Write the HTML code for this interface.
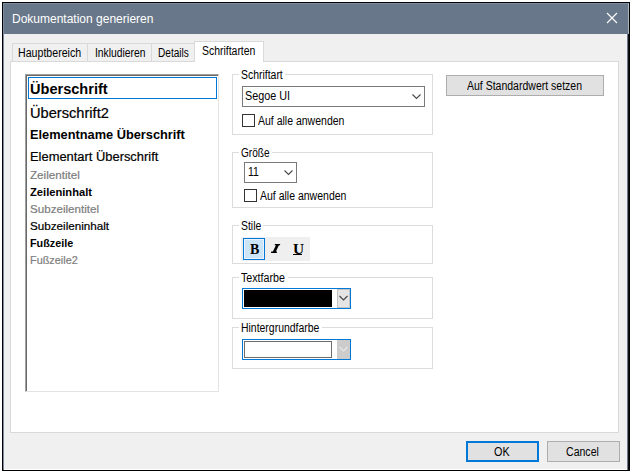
<!DOCTYPE html>
<html><head><meta charset="utf-8">
<style>
*{box-sizing:border-box;margin:0;padding:0}
html,body{width:632px;height:473px;overflow:hidden;background:#fff}
body{position:relative;font-family:"Liberation Sans",sans-serif;color:#000}
.a{position:absolute}
.t{position:absolute;white-space:nowrap;font-size:12px;line-height:12px;transform-origin:0 0}
.grp{position:absolute;border:1px solid #dcdcdc}
.lbl{position:absolute;background:#fff;padding:0 2px 0 2px;height:12px}
.cb{position:absolute;width:13px;height:13px;border:1px solid #333;background:#fff}
.btn{position:absolute;background:#e1e1e1;border:1px solid #adadad}
.li{position:absolute;left:30px;white-space:nowrap;transform-origin:0 0;-webkit-text-stroke:0.2px}
</style></head><body>
<!-- window frame -->
<div class="a" style="left:2px;top:2px;width:628px;height:469px;border:1px solid #000;background:#687789"></div>
<div class="a" style="left:3px;top:3px;width:625px;height:1px;background:#7b8a9c"></div>
<div class="a" style="left:3px;top:3px;width:1px;height:466px;background:#7b8a9c"></div>
<!-- title -->
<div class="t" style="left:12px;top:13px;color:#fff">Dokumentation generieren</div>
<svg class="a" style="left:605px;top:11px" width="14" height="14" viewBox="0 0 14 14"><path d="M2 2 L12 12 M12 2 L2 12" stroke="#fff" stroke-width="1.1" fill="none"/></svg>
<!-- body -->
<div class="a" style="left:4px;top:34px;width:623px;height:435px;background:#f0f0f0"></div>
<div class="a" style="left:4px;top:469px;width:623px;height:1px;background:#fff"></div>
<div class="a" style="left:628px;top:34px;width:1px;height:436px;background:#111"></div>
<div class="a" style="left:628px;top:3px;width:1px;height:31px;background:#a9b8c0"></div>

<!-- tabs -->
<div class="a" style="left:12px;top:43px;width:76px;height:19px;border:1px solid #d9d9d9;border-bottom:0;background:#f0f0f0"></div>
<div class="a" style="left:87px;top:43px;width:65px;height:19px;border:1px solid #d9d9d9;border-bottom:0;background:#f0f0f0"></div>
<div class="a" style="left:151px;top:43px;width:44px;height:19px;border:1px solid #d9d9d9;border-bottom:0;background:#f0f0f0"></div>
<!-- panel -->
<div class="a" style="left:10px;top:61px;width:609px;height:372px;border:1px solid #d9d9d9;background:#fff"></div>
<!-- selected tab -->
<div class="a" style="left:194px;top:41px;width:70px;height:21px;border:1px solid #d9d9d9;border-bottom:0;background:#fff"></div>

<div class="t" style="left:18px;top:47px;transform:scaleX(0.885)">Hauptbereich</div>
<div class="t" style="left:95px;top:47px;transform:scaleX(0.86)">Inkludieren</div>
<div class="t" style="left:158px;top:47px;transform:scaleX(0.84)">Details</div>
<div class="t" style="left:202px;top:45px;transform:scaleX(0.87)">Schriftarten</div>

<!-- listbox -->
<div class="a" style="left:25px;top:74px;width:194px;height:318px;border-style:solid;border-width:1px;border-color:#a0a0a0 #e3e3e3 #e3e3e3 #a0a0a0;background:#fff"></div>
<div class="a" style="left:26px;top:75px;width:192px;height:316px;border-style:solid;border-width:1px 0 0 1px;border-color:#696969"></div>
<div class="a" style="left:28px;top:77px;width:189px;height:22px;border:1px solid #0078d7"></div>

<div class="li" style="top:82px;-webkit-text-stroke:0;font-weight:bold;font-size:14px;line-height:14px;transform:scaleX(1.04)">Überschrift</div>
<div class="li" style="top:106px;font-size:14px;line-height:14px;transform:scaleX(1.045)">Überschrift2</div>
<div class="li" style="top:129px;-webkit-text-stroke:0;font-weight:bold;font-size:12px;line-height:12px;transform:scaleX(1.065)">Elementname Überschrift</div>
<div class="li" style="top:151px;font-size:12px;line-height:12px;transform:scaleX(1.075)">Elementart Überschrift</div>
<div class="li" style="top:170px;font-size:11px;line-height:11px;color:#7d7d7d;transform:scaleX(1.06)">Zeilentitel</div>
<div class="li" style="top:187px;-webkit-text-stroke:0;font-weight:bold;font-size:11px;line-height:11px;transform:scaleX(1.015)">Zeileninhalt</div>
<div class="li" style="top:204px;font-size:11px;line-height:11px;color:#7d7d7d;transform:scaleX(1.055)">Subzeilentitel</div>
<div class="li" style="top:221px;font-size:11px;line-height:11px;transform:scaleX(1.06)">Subzeileninhalt</div>
<div class="li" style="top:238px;-webkit-text-stroke:0;font-weight:bold;font-size:11px;line-height:11px;transform:scaleX(0.98)">Fußzeile</div>
<div class="li" style="top:255px;font-size:11px;line-height:11px;color:#7d7d7d;transform:scaleX(0.99)">Fußzeile2</div>

<!-- Group: Schriftart -->
<div class="grp" style="left:232px;top:74px;width:201px;height:61px"></div>
<div class="lbl" style="left:239px;top:69px;width:46px"></div>
<div class="t" style="left:241px;top:69px;transform:scaleX(0.87)">Schriftart</div>
<div class="a" style="left:242px;top:86px;width:183px;height:21px;border:1px solid #7a7a7a;background:#fff"></div>
<div class="t" style="left:245px;top:90px;transform:scaleX(0.9)">Segoe UI</div>
<svg class="a" style="left:411px;top:93px" width="11" height="7" viewBox="0 0 11 7"><path d="M1.5 1.5 L5.5 5.5 L9.5 1.5" stroke="#4a4a4a" stroke-width="1.1" fill="none"/></svg>
<div class="cb" style="left:242px;top:114px"></div>
<div class="t" style="left:258px;top:115px;transform:scaleX(0.875)">Auf alle anwenden</div>

<!-- Group: Größe -->
<div class="grp" style="left:232px;top:152px;width:201px;height:56px"></div>
<div class="lbl" style="left:239px;top:147px;width:33px"></div>
<div class="t" style="left:241px;top:147px;transform:scaleX(0.84)">Größe</div>
<div class="a" style="left:244px;top:162px;width:53px;height:21px;border:1px solid #7a7a7a;background:#fff"></div>
<div class="t" style="left:248px;top:166px;transform:scaleX(0.87)">11</div>
<svg class="a" style="left:283px;top:169px" width="11" height="7" viewBox="0 0 11 7"><path d="M1.5 1.5 L5.5 5.5 L9.5 1.5" stroke="#4a4a4a" stroke-width="1.1" fill="none"/></svg>
<div class="cb" style="left:244px;top:189px"></div>
<div class="t" style="left:260px;top:190px;transform:scaleX(0.875)">Auf alle anwenden</div>

<!-- Group: Stile -->
<div class="grp" style="left:232px;top:225px;width:201px;height:39px"></div>
<div class="lbl" style="left:239px;top:220px;width:24px"></div>
<div class="t" style="left:241px;top:220px;transform:scaleX(0.87)">Stile</div>
<div class="a" style="left:241px;top:237px;width:69px;height:24px;background:#efefef"></div>
<div class="a" style="left:243px;top:238px;width:22px;height:22px;background:#cce4f7;border:1px solid #0078d7"></div>
<div class="a" style="left:244px;top:239px;width:20px;height:20px;border:1px solid #eaf3fb"></div>
<div class="a" style="left:250px;top:243px;font:bold 14px/14px 'Liberation Serif';transform:scaleX(1.0);transform-origin:0 0">B</div>
<svg class="a" style="left:270px;top:243px" width="12" height="12" viewBox="0 0 12 12"><path d="M4.9 1 H10.2 L10 2.2 H8.9 L5.9 8.6 H7 L6.8 10 H1 L1.2 8.6 H2.9 L5.9 2.2 H4.7 Z" fill="#000"/></svg>
<div class="a" style="left:293px;top:243px;font:bold 14px/14px 'Liberation Serif';transform:scaleX(1.1);transform-origin:0 0">U</div>
<div class="a" style="left:293px;top:254px;width:9px;height:1px;background:#000"></div>

<!-- Group: Textfarbe -->
<div class="grp" style="left:232px;top:277px;width:201px;height:42px"></div>
<div class="lbl" style="left:239px;top:272px;width:49px"></div>
<div class="t" style="left:241px;top:272px;transform:scaleX(0.89)">Textfarbe</div>
<div class="a" style="left:242px;top:288px;width:109px;height:21px;border:1px solid #0078d7;background:#fff"></div>
<div class="a" style="left:244px;top:290px;width:88px;height:17px;background:#000"></div>
<div class="a" style="left:337px;top:289px;width:13px;height:19px;background:#e5e5e5;border:1px solid #c4c4c4"></div>
<svg class="a" style="left:338px;top:295px" width="11" height="7" viewBox="0 0 11 7"><path d="M1.5 1 L5.5 5 L9.5 1" stroke="#444" stroke-width="1.1" fill="none"/></svg>

<!-- Group: Hintergrundfarbe -->
<div class="grp" style="left:232px;top:327px;width:201px;height:42px"></div>
<div class="lbl" style="left:239px;top:322px;width:83px"></div>
<div class="t" style="left:241px;top:322px;transform:scaleX(0.87)">Hintergrundfarbe</div>
<div class="a" style="left:242px;top:339px;width:109px;height:21px;border:1px solid #0078d7;background:#fff"></div>
<div class="a" style="left:244px;top:341px;width:88px;height:17px;background:#fff;border:1px solid #6d6d6d"></div>
<div class="a" style="left:337px;top:340px;width:13px;height:19px;background:#cccccc"></div>
<svg class="a" style="left:338px;top:346px" width="11" height="7" viewBox="0 0 11 7"><path d="M1.5 1 L5.5 5 L9.5 1" stroke="#e8e8e8" stroke-width="1.1" fill="none"/></svg>

<!-- Auf Standardwert setzen -->
<div class="btn" style="left:446px;top:75px;width:158px;height:21px"></div>
<div class="t" style="left:467px;top:80px;transform:scaleX(0.875)">Auf Standardwert setzen</div>

<!-- OK / Cancel -->
<div class="btn" style="left:466px;top:441px;width:73px;height:21px;border:2px solid #0078d7"></div>
<div class="t" style="left:494px;top:446px;transform:scaleX(0.9)">OK</div>
<div class="btn" style="left:547px;top:441px;width:73px;height:21px"></div>
<div class="t" style="left:566px;top:446px;transform:scaleX(0.88)">Cancel</div>
</body></html>
